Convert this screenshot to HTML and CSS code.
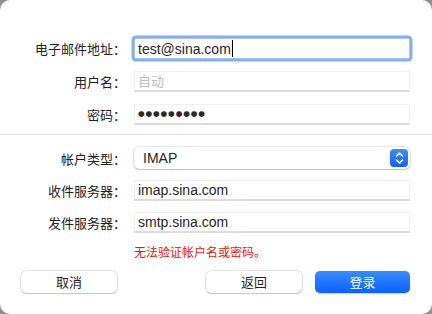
FILE: index.html
```html
<!DOCTYPE html>
<html>
<head>
    <meta charset="utf-8" />
    <link rel="stylesheet" href="styles.css">
</head>
<body>
    <div class="dialog">
        <div class="section top">
            <div class="row">
                <div class="label">电子邮件地址：</div>
                <div class="field focus">test@sina.com<span class="caret"></span></div>
            </div>
            <div class="row">
                <div class="label">用户名：</div>
                <div class="field placeholder">自动</div>
            </div>
            <div class="row">
                <div class="label">密码：</div>
                <div class="field dots">●●●●●●●●●</div>
            </div>
        </div>
        <div class="separator"></div>
        <div class="section bottom">
            <div class="row">
                <div class="label">帐户类型：</div>
                <div class="select">
                    <span>IMAP</span>
                    <span class="stepper">
                        <svg width="11" height="14" viewBox="0 0 11 14">
                            <path d="M2.5 5 L5.5 2 L8.5 5" fill="none" stroke="#fff" stroke-width="1.6" stroke-linecap="round" stroke-linejoin="round"/>
                            <path d="M2.5 9 L5.5 12 L8.5 9" fill="none" stroke="#fff" stroke-width="1.6" stroke-linecap="round" stroke-linejoin="round"/>
                        </svg>
                    </span>
                </div>
            </div>
            <div class="row">
                <div class="label">收件服务器：</div>
                <div class="field">imap.sina.com</div>
            </div>
            <div class="row">
                <div class="label">发件服务器：</div>
                <div class="field">smtp.sina.com</div>
            </div>
        </div>
        <div class="error">无法验证帐户名或密码。</div>
        <div class="buttons">
            <div class="btn">取消</div>
            <div class="right">
                <div class="btn">返回</div>
                <div class="btn primary">登录</div>
            </div>
        </div>
    </div>
</body>
</html>
```
FILE: styles.css
```css
*{
    padding: 0;
    margin: 0;
    box-sizing: border-box;
}
body{
    background-color: #8f8f8f;
    font-family: "Liberation Sans", "Noto Sans CJK SC", sans-serif;
    font-size: 13px;
    color: #262626;
}

.dialog{
    width: 432px;
    height: 314px;
    background-color: #ffffff;
    border-radius: 10px;
    padding-top: 38px;
    display: flex;
    flex-direction: column;
}
.section{
    display: flex;
    flex-direction: column;
    padding-right: 22px;
}
.section.top{
    gap: 12px;
}
.section.bottom{
    gap: 11.5px;
}
.row{
    display: grid;
    grid-template-columns: 126px 1fr;
    column-gap: 8px;
    height: 21px;
    align-items: center;
}
.label{
    text-align: right;
    white-space: nowrap;
    font-family: "Noto Sans CJK SC", sans-serif;
    font-size: 13px;
    color: #222;
}

.field{
    height: 21px;
    background-color: #fff;
    border: 1px solid #f0f0f0;
    border-bottom: 2px solid #dcdcdc;
    padding: 0 3px;
    font-size: 14px;
    line-height: 18px;
    display: flex;
    align-items: center;
    white-space: nowrap;
}
.field.focus{
    border: 1px solid #a8c4f4;
    border-radius: 2px;
    box-shadow: 0 0 0 2.5px #86aef2;
}
.caret{
    display: inline-block;
    width: 1px;
    height: 17px;
    background-color: #000;
    margin-left: 1px;
}
.field.placeholder{
    color: #bdbdbd;
    font-family: "Noto Sans CJK SC", sans-serif;
    font-size: 13px;
}
.field.dots{
    font-family: "DejaVu Sans", sans-serif;
    font-size: 7.6px;
    letter-spacing: 0.9px;
    color: #2a2a2a;
}

.select{
    height: 22px;
    border-radius: 5px;
    background-color: #fff;
    box-shadow: 0 0 0 0.5px rgba(0, 0, 0, 0.18), 0 1px 1.5px rgba(0, 0, 0, 0.18);
    display: flex;
    align-items: center;
    justify-content: space-between;
    padding: 0 2px 0 9px;
    font-size: 14px;
}
.stepper{
    width: 18px;
    height: 18px;
    border-radius: 4px;
    background: linear-gradient(#3f8efc, #0b63f6);
    display: flex;
    align-items: center;
    justify-content: center;
}

.separator{
    height: 1px;
    background-color: #e2e2e2;
    margin: 9px 0 12px;
}

.error{
    color: #e8160c;
    font-family: "Noto Sans CJK SC", sans-serif;
    font-size: 12px;
    line-height: 16px;
    margin: 11px 0 0 134px;
}

.buttons{
    display: flex;
    justify-content: space-between;
    padding: 0 22px 0 21px;
    margin-top: 11px;
}
.right{
    display: flex;
    gap: 13px;
}
.btn{
    width: 96px;
    height: 22px;
    border-radius: 5px;
    background-color: #fff;
    box-shadow: 0 0 0 0.5px rgba(0, 0, 0, 0.2), 0 1px 1.5px rgba(0, 0, 0, 0.15);
    font-family: "Noto Sans CJK SC", sans-serif;
    font-size: 13px;
    text-align: center;
    line-height: 22px;
    color: #1f1f1f;
}
.btn.primary{
    width: 95px;
    background: linear-gradient(#3a8bfd, #0962fc);
    color: #fff;
    box-shadow: 0 0.5px 1.5px rgba(0, 0, 0, 0.2);
}
```
